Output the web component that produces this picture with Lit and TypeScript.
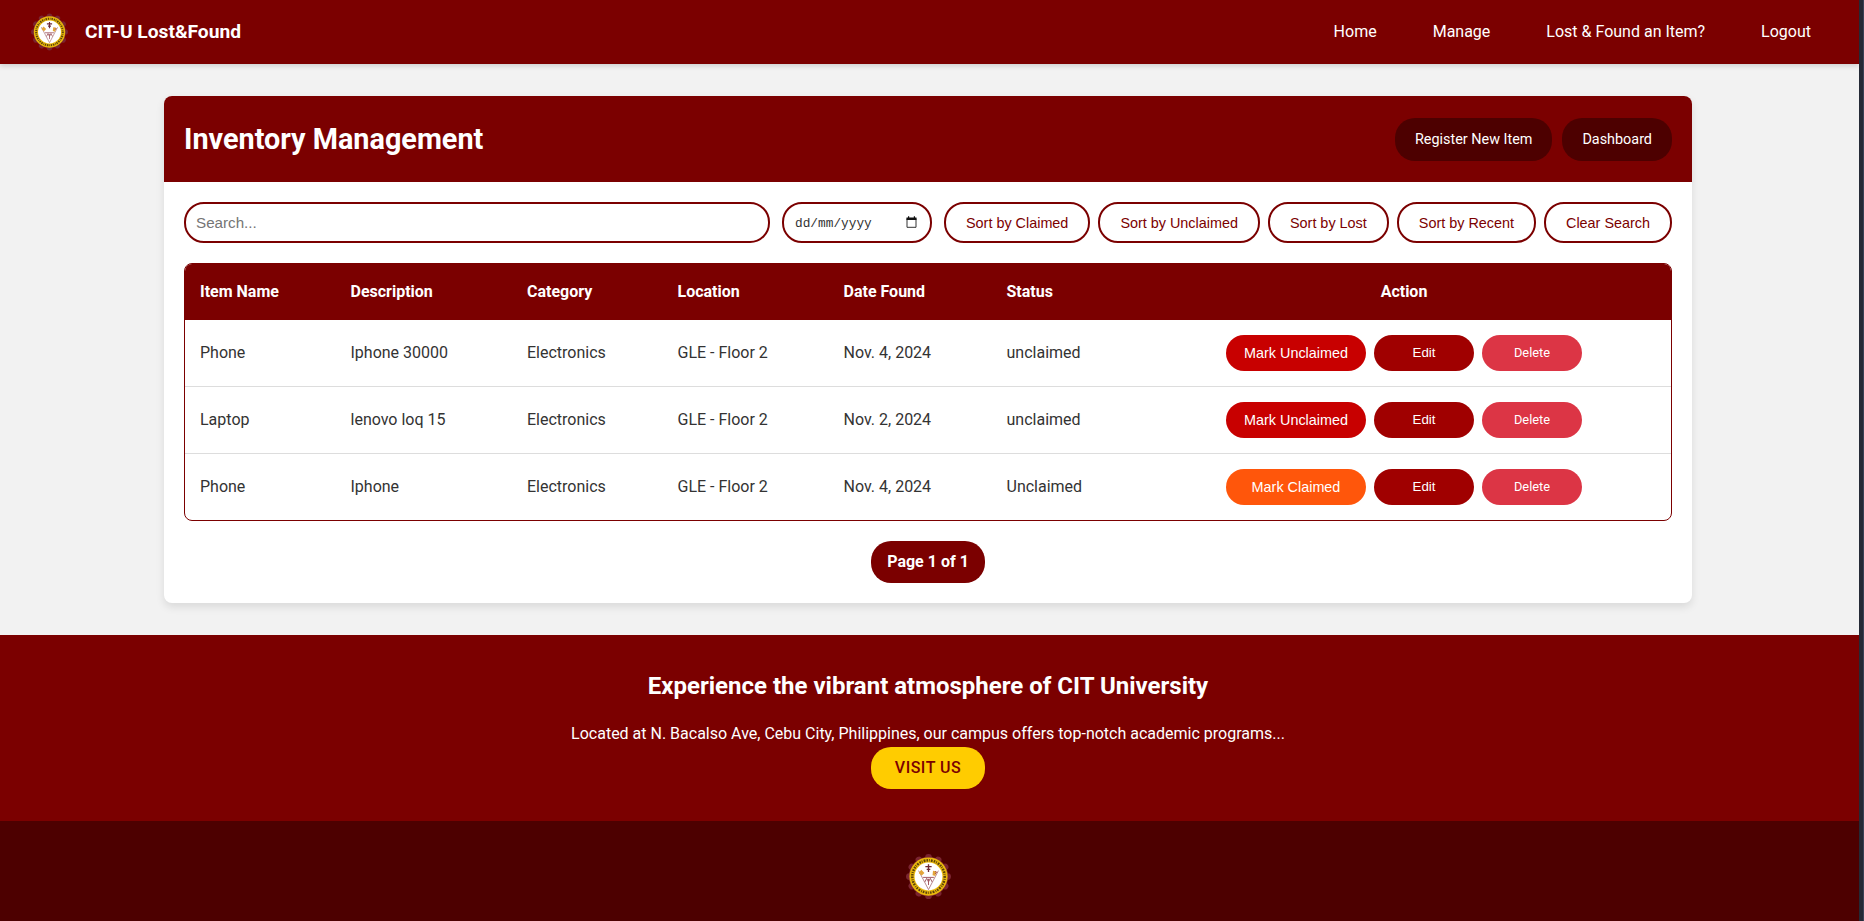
import { LitElement, html, css, svg } from "lit";
import { customElement } from "lit/decorators.js";

interface Item {
  name: string;
  description: string;
  category: string;
  location: string;
  date: string;
  status: string;
  mark: "Unclaimed" | "Claimed";
}

const ITEMS: Item[] = [
  { name: "Phone", description: "Iphone 30000", category: "Electronics", location: "GLE - Floor 2", date: "Nov. 4, 2024", status: "unclaimed", mark: "Unclaimed" },
  { name: "Laptop", description: "lenovo loq 15", category: "Electronics", location: "GLE - Floor 2", date: "Nov. 2, 2024", status: "unclaimed", mark: "Unclaimed" },
  { name: "Phone", description: "Iphone", category: "Electronics", location: "GLE - Floor 2", date: "Nov. 4, 2024", status: "Unclaimed", mark: "Claimed" },
];

const TEETH = Array.from({ length: 12 }, (_, i) => i * 30);

@customElement("school-seal")
class SchoolSeal extends LitElement {
  static styles = css`
    :host { display: block; }
    svg { display: block; width: 100%; height: 100%; }
  `;
  render() {
    return html`<svg viewBox="0 0 100 100" aria-hidden="true">
      <g fill="#7a2430">
        <circle cx="50" cy="50" r="44" />
        ${TEETH.map((a) => svg`<circle cx="50" cy="7.5" r="7.5" transform=${`rotate(${a} 50 50)`} />`)}
      </g>
      <circle cx="50" cy="50" r="42.5" fill="#e9b80c" />
      <circle cx="50" cy="50" r="36" fill="none" stroke="#5c430a" stroke-width="5.5" stroke-dasharray="3.4 2.2 1.8 2.6 4 2.4" />
      <circle cx="50" cy="50" r="31" fill="#fff" />
      <path d="M28 37L50 79L72 37" fill="none" stroke="#b07d84" stroke-width="2" />
      <path d="M50 23V40M43 28H57M46 34h8" stroke="#6d2936" stroke-width="3" />
      <path d="M28 42l6-7 7 7-6 6zM60 37l8 2-3 10-6-2z" fill="#e3a53a" />
      <path d="M65 38l3 3-3 3" stroke="#9a3944" stroke-width="2" fill="none" />
      <path d="M38 52h24M42 62l4-8 4 8 4-8 4 8M50 55v14" stroke="#a25a63" stroke-width="2.2" fill="none" />
    </svg>`;
  }
}

@customElement("app-root")
class AppRoot extends LitElement {
  static styles = css`
    :host {
      display: grid;
      grid-template-columns: minmax(0, 1fr) 4px 1px;
      height: 921px;
      overflow: hidden;
      font-family: Roboto, sans-serif;
      font-size: 16px;
      color: #333;
      background: #f2f2f2;
    }
    * { box-sizing: border-box; }
    .page { display: flex; flex-direction: column; }
    .edge { background: #242a36; }
    .edge-light { background: #3a4256; }
    .topbar {
      flex: none;
      height: 64px;
      display: flex;
      align-items: center;
      padding: 0 48px 0 30.5px;
      background: #7b0000;
      color: #fff;
      box-shadow: 0 2px 5px rgba(0, 0, 0, 0.15);
    }
    .seal-sm { width: 37px; height: 38px; }
    .brand { margin: 0 auto 0 17.5px; font-size: 19.2px; font-weight: 700; line-height: 24px; }
    .nav { display: flex; gap: 56px; padding-bottom: 2px; font-weight: 400; color: #fff; }
    .card {
      flex: none;
      width: 1528px;
      height: 507px;
      margin: 32px 0 32px 164px;
      background: #fff;
      border-radius: 8px;
      box-shadow: 0 4px 8px rgba(0, 0, 0, 0.1);
    }
    .card-head {
      height: 86px;
      display: flex;
      align-items: center;
      gap: 10px;
      padding: 0 20px;
      background: #7b0000;
      color: #fff;
      border-radius: 8px 8px 0 0;
    }
    .title { margin: 0 auto 0 0; font-size: 28.8px; font-weight: 700; line-height: 34px; }
    .head-btn {
      height: 43px;
      padding: 0 20px;
      display: flex;
      align-items: center;
      border-radius: 20px;
      background: #4d0000;
      font-size: 14.4px;
      font-weight: 400;
      color: #fff;
    }
    .card-body { padding: 20px; display: flex; flex-direction: column; gap: 20px; }
    .filters {
      height: 41px;
      display: grid;
      grid-template-columns: 586px 150px 1fr;
      gap: 12px;
      font-family: "Liberation Sans", Arial, sans-serif;
    }
    .pill { border: 2px solid #7b0000; border-radius: 20px; display: flex; align-items: center; background: #fff; }
    .search { padding: 0 10px; font-size: 15.2px; color: #757575; }
    .date { justify-content: space-between; padding: 0 12px 0 11px; color: #333; }
    .date-text { padding-top: 1px; font-family: "Liberation Mono", monospace; font-size: 12.8px; }
    .cal { display: block; width: 13px; height: 14px; }
    .sorts { display: flex; justify-content: space-between; }
    .sort { padding: 1px 20px 0; font-size: 14.4px; color: #7b0000; white-space: nowrap; }
    .table { border: 1px solid #7b0000; border-radius: 8px; overflow: hidden; }
    .row {
      display: grid;
      grid-template-columns: 150.5px 176.5px 150.5px 166px 163px 145.5px 1fr;
      align-items: center;
      height: 67px;
      border-bottom: 1px solid #ddd;
    }
    .row:last-child { border-bottom: 0; height: 66px; }
    .row.head { height: 56px; border: 0; background: #7b0000; color: #fff; font-weight: 700; }
    .cell { padding: 0 0 2px 15px; }
    .action { text-align: center; padding-bottom: 2px; }
    .actions {
      display: flex;
      justify-content: center;
      gap: 8px;
      color: #fff;
      font-family: "Liberation Sans", Arial, sans-serif;
    }
    .btn { width: 100px; height: 36px; border-radius: 20px; display: flex; align-items: center; justify-content: center; }
    .mark { width: 140px; font-size: 14.4px; background: #c80000; }
    .mark.claimed { background: #ff560b; }
    .edit { font-size: 13.3px; background: #a00000; padding-bottom: 1px; }
    .delete { font-family: Roboto, sans-serif; font-size: 12.8px; font-weight: 400; background: #dc3545; padding-bottom: 1px; }
    .pager {
      align-self: center;
      height: 42px;
      width: 114px;
      display: flex;
      align-items: center;
      justify-content: center;
      padding-bottom: 2px;
      border-radius: 20px;
      background: #7b0000;
      color: #fff;
      font-weight: 700;
    }
    .promo {
      flex: none;
      height: 186px;
      display: flex;
      flex-direction: column;
      align-items: center;
      padding: 37px 3px 0 0;
      background: #7b0000;
      color: #fff;
    }
    .promo-title { margin: 0 0 20px; font-size: 24px; font-weight: 700; line-height: 28px; }
    .promo-text { margin: 0; line-height: 27px; }
    .visit {
      width: 114px;
      height: 42px;
      display: flex;
      align-items: center;
      justify-content: center;
      padding-bottom: 2px;
      border-radius: 20px;
      background: #ffcc00;
      color: #7b0000;
      font-weight: 500;
      letter-spacing: 0.5px;
    }
    .foot { flex: 1; background: #4d0000; display: flex; justify-content: center; padding: 33px 3px 0 0; }
    .seal-lg { width: 45px; height: 45px; }
  `;

  private row(item: Item) {
    return html`<div class="row">
      <div class="cell">${item.name}</div>
      <div class="cell">${item.description}</div>
      <div class="cell">${item.category}</div>
      <div class="cell">${item.location}</div>
      <div class="cell">${item.date}</div>
      <div class="cell">${item.status}</div>
      <div class="actions">
        <div class="btn mark ${item.mark.toLowerCase()}">Mark ${item.mark}</div>
        <div class="btn edit">Edit</div>
        <div class="btn delete">Delete</div>
      </div>
    </div>`;
  }

  render() {
    return html`
      <div class="page">
        <header class="topbar">
          <school-seal class="seal-sm"></school-seal>
          <div class="brand">CIT-U Lost&amp;Found</div>
          <nav class="nav"><span>Home</span><span>Manage</span><span>Lost &amp; Found an Item?</span><span>Logout</span></nav>
        </header>
        <main class="card">
          <div class="card-head">
            <h1 class="title">Inventory Management</h1>
            <div class="head-btn">Register New Item</div>
            <div class="head-btn">Dashboard</div>
          </div>
          <div class="card-body">
            <div class="filters">
              <div class="pill search">Search...</div>
              <div class="pill date">
                <span class="date-text">dd/mm/yyyy</span>
                <svg class="cal" viewBox="0 0 13 14"><path d="M2 2.5h9v8.8H2z" fill="none" stroke="#333" stroke-width="1" /><path d="M1.5 1.5h10v2.6h-10zM3 .3h1.2v2H3zM8.8.3H10v2H8.8z" fill="#111" /></svg>
              </div>
              <div class="sorts">
                ${["Sort by Claimed", "Sort by Unclaimed", "Sort by Lost", "Sort by Recent", "Clear Search"].map(
                  (label) => html`<div class="pill sort">${label}</div>`
                )}
              </div>
            </div>
            <div class="table">
              <div class="row head">
                ${["Item Name", "Description", "Category", "Location", "Date Found", "Status"].map(
                  (label) => html`<div class="cell">${label}</div>`
                )}
                <div class="action">Action</div>
              </div>
              ${ITEMS.map((item) => this.row(item))}
            </div>
            <div class="pager">Page 1 of 1</div>
          </div>
        </main>
        <section class="promo">
          <h2 class="promo-title">Experience the vibrant atmosphere of CIT University</h2>
          <p class="promo-text">Located at N. Bacalso Ave, Cebu City, Philippines, our campus offers top-notch academic programs...</p>
          <div class="visit">VISIT US</div>
        </section>
        <footer class="foot"><school-seal class="seal-lg"></school-seal></footer>
      </div>
      <div class="edge"></div>
      <div class="edge-light"></div>
    `;
  }
}
